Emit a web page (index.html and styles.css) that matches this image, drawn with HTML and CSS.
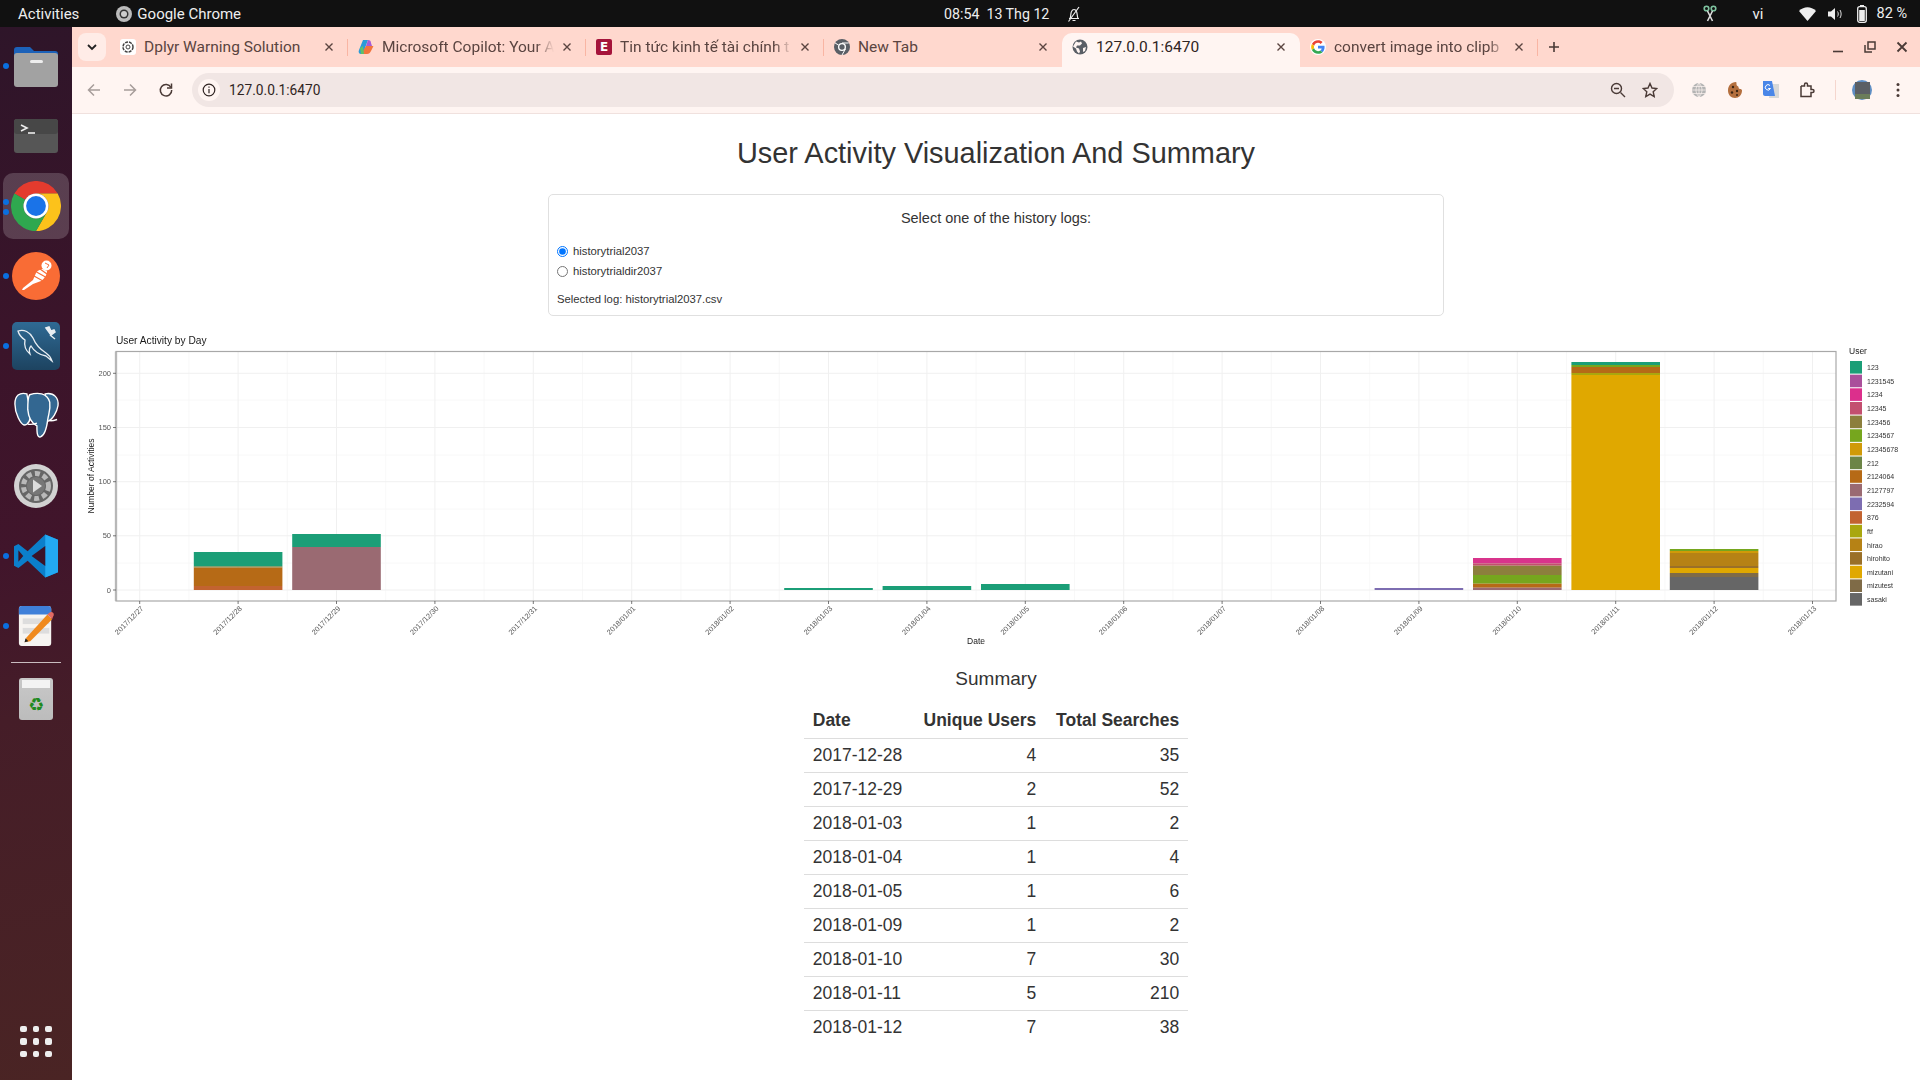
FILE: index.html
```html
<!DOCTYPE html>
<html lang="en">

<head>
    <meta charset="UTF-8">
    <title>User Activity Visualization And Summary</title>
    <link rel="stylesheet" href="styles.css">
</head>

<body>
    <header class="topbar">
        <span class="activities">Activities</span>
        <span class="app-name">
            <svg width="16" height="16" viewBox="0 0 16 16">
                <circle cx="8" cy="8" r="8" fill="#bbb" />
                <circle cx="8" cy="8" r="4.5" fill="#333" />
                <circle cx="8" cy="8" r="3" fill="#ccc" />
            </svg>
            Google Chrome
        </span>
        <span class="clock">08:54&nbsp; 13 Thg 12</span>
        <svg class="bell" width="16" height="18" viewBox="0 0 16 18" fill="none" stroke="#eee" stroke-width="1.2">
            <path d="M3 13.5h10M4 13.5c1-2 .5-5 1.5-7 .6-1.3 1.5-2 2.5-2s2 .7 2.5 2c1 2 .5 5 1.5 7M6.5 15.5h3M2.5 16.5L13 2" />
        </svg>
        <div class="tray">
            <svg width="14" height="18" viewBox="0 0 14 18" fill="none" stroke="#7fc4a0" stroke-width="1.6">
                <circle cx="3.5" cy="3.5" r="2.3" />
                <circle cx="10.5" cy="3.5" r="2.3" />
                <path d="M4.5 6l5 10M9.5 6l-5 10" stroke="#ddd" />
            </svg>
            <span class="tray-lang">vi</span>
            <svg class="tray-wifi" width="17" height="14" viewBox="0 0 17 14">
                <path d="M8.5 14L0 4c5-5 12-5 17 0z" fill="#eee" />
            </svg>
            <svg class="tray-sound" width="16" height="14" viewBox="0 0 16 14" fill="none" stroke="#ddd" stroke-width="1">
                <path d="M0 4.5h3L7 1v12L3 9.5H0z" fill="#eee" stroke="none" />
                <path d="M9.5 4.5c1 1.5 1 3.5 0 5M12 3c1.5 2.5 1.5 5.5 0 8" />
            </svg>
            <svg class="tray-battery" width="10" height="18" viewBox="0 0 10 18">
                <rect x=".7" y="1.7" width="8.6" height="15.6" rx="2" fill="none" stroke="#eee" stroke-width="1.3" />
                <rect x="3" y="0" width="4" height="2" fill="#eee" />
                <rect x="2.2" y="5" width="5.6" height="11" fill="#eee" />
            </svg>
            <span class="tray-percent">82 %</span>
        </div>
    </header>

    <div class="desktop">
        <nav class="dock">
            <div class="dock-item running">
                <svg width="46" height="44" viewBox="0 0 46 44">
                    <path d="M1 6c0-2 1-3 3-3h13l4 4h21c2 0 3 1 3 3v14H1z" fill="#1c62b9" />
                    <rect x="1" y="9" width="44" height="34" rx="3" fill="#a2a2a2" />
                    <rect x="17" y="16" width="13" height="3" rx="1.5" fill="#eee" />
                </svg>
            </div>
            <div class="dock-item">
                <svg width="44" height="34" viewBox="0 0 44 34">
                    <rect width="44" height="34" rx="3" fill="#565656" />
                    <rect width="44" height="15" rx="3" fill="#474747" />
                    <path d="M7 6l6 3-6 3" fill="none" stroke="#eee" stroke-width="1.6" />
                    <path d="M14 14h7" stroke="#eee" stroke-width="1.6" />
                </svg>
            </div>
            <div class="dock-item active running double">
                <svg width="50" height="50" viewBox="0 0 48 48">
                    <path d="M3.2 12A24 24 0 0 1 44.8 12H24A12 12 0 0 0 13.6 18z" fill="#e33b2e" />
                    <path d="M24 12H44.8A24 24 0 0 1 24 48L34.4 30A12 12 0 0 0 24 12z" fill="#fcc21b" />
                    <path d="M13.6 18L3.2 12A24 24 0 0 0 24 48L34.4 30A12 12 0 0 1 13.6 18z" fill="#2fa84f" />
                    <circle cx="24" cy="24" r="12" fill="#fff" />
                    <circle cx="24" cy="24" r="9.5" fill="#1a73e8" />
                </svg>
            </div>
            <div class="dock-item running">
                <svg width="48" height="48" viewBox="0 0 48 48">
                    <circle cx="24" cy="24" r="24" fill="#f96c35" />
                    <path d="M10 38l1-2 10-8 3-7c2-3 5-4 7-4l4 2c0 4-3 8-6 10l-8 3-9 6z" fill="#fff" />
                    <circle cx="34.5" cy="13.5" r="5" fill="#fff" />
                    <path d="M33 11l4 2-2 3" fill="none" stroke="#f96c35" />
                    <path d="M22 24l9 5M24.5 20l9 5M28 17l7 5" stroke="#f96c35" stroke-width="1.2" />
                </svg>
            </div>
            <div class="dock-item running">
                <svg width="48" height="48" viewBox="0 0 48 48">
                    <defs>
                        <linearGradient id="mysqlBg" x1="0" y1="0" x2="0" y2="1">
                            <stop offset="0%" stop-color="#2f6a94"></stop>
                            <stop offset="100%" stop-color="#1d4360"></stop>
                        </linearGradient>
                    </defs>
                    <rect width="48" height="48" rx="5" fill="url(#mysqlBg)" />
                    <path d="M6 9c6-2 12 1 15 7 2 5 5 10 13 15 3 2 5 5 6 8l-6-5c-6-1-12-5-15-10-2 2-2 5-1 8-5-4-6-9-5-14-3-2-6-5-7-9z" fill="none" stroke="#e8eef3" stroke-width="1.3" />
                    <path d="M34 6l5 7 4-3-1-2-3 1-2-4zM38 13l5 4" fill="#e8eef3" stroke="#e8eef3" stroke-width="1.5" />
                </svg>
            </div>
            <div class="dock-item">
                <svg class="pg-icon" width="72" height="70" viewBox="0 0 72 70" fill="#336791" stroke="#fff" stroke-width="1.5">
                    <path d="M26 13C18 11 13 15 13 24C13 34 19 46 23 47C27 47 30 44 30 34z" />
                    <path d="M46 13C56 11 61 18 60 26C59 32 54 42 48 43z" />
                    <path d="M29 14C38 11 48 12 51 22C52 30 50 34 49 40C48 48 46 58 41 60C37 61 37 54 37 48C33 46 28 42 27 30C27 22 27 17 29 14z" />
                    <path d="M27 46c4 1 7 0 10-1M50 42c3 1 6 0 9-1" fill="none" />
                </svg>
            </div>
            <div class="dock-item">
                <svg width="44" height="44" viewBox="0 0 44 44">
                    <circle cx="22" cy="22" r="22" fill="#d2d2d2" />
                    <circle cx="22" cy="22" r="17" fill="#666" />
                    <circle cx="22" cy="22" r="12.5" fill="none" stroke="#b9b9b9" stroke-width="5" stroke-dasharray="5 3.2" />
                    <circle cx="22" cy="22" r="9" fill="#777" />
                    <path d="M19 15.5l9 6.5-9 6.5z" fill="#ddd" />
                </svg>
            </div>
            <div class="dock-item running">
                <svg width="44" height="44" viewBox="0 0 100 100">
                    <path d="M71 99L31 61 10 77 0 72V28l10-5 21 16L71 1l29 12v74z" fill="#0b7fcb" />
                    <path d="M71 1l29 12v74L71 99z" fill="#23a9f2" />
                    <path d="M71 27L40 50l31 23z" fill="#3b1429" />
                    <path d="M10 37v26l11-13z" fill="#3b1429" />
                </svg>
            </div>
            <div class="dock-item running">
                <svg width="38" height="44" viewBox="0 0 40 44">
                    <rect x="2" y="1" width="34" height="42" rx="3" fill="#f6f4f1" />
                    <path d="M2 10V4c0-2 1-3 3-3h28c2 0 3 1 3 3v6z" fill="#3f80d9" />
                    <rect x="6" y="14" width="28" height="6" fill="#ddd" />
                    <rect x="6" y="24" width="28" height="6" fill="#ddd" />
                    <path d="M10 34l22-24 5 5-23 23-6 1z" fill="#f08a1d" />
                    <path d="M32 10l2-2c1-1 3-1 4 0s1 3 0 4l-1 3z" fill="#e26a63" />
                    <path d="M8 39l1-4 3 3z" fill="#222" />
                </svg>
            </div>
            <div class="dock-sep"></div>
            <div class="dock-item">
                <div class="trash"><span class="trash-lid"></span><span class="trash-mark">♻</span></div>
            </div>
            <div class="dock-grid">
                <i></i><i></i><i></i><i></i><i></i><i></i><i></i><i></i><i></i>
            </div>
        </nav>

        <div class="chrome">
            <div class="tabstrip">
                <div class="tab-search">
                    <svg width="10" height="7" viewBox="0 0 10 7" fill="none" stroke="#222" stroke-width="1.8">
                        <path d="M1 1l4 4 4-4" />
                    </svg>
                </div>

                <div class="tab">
                    <svg class="favicon" viewBox="0 0 16 16">
                        <rect width="16" height="16" rx="3" fill="#fff" />
                        <circle cx="8" cy="8" r="5" fill="none" stroke="#444" stroke-width="1.5" stroke-dasharray="3 1" />
                        <circle cx="8" cy="8" r="2" fill="none" stroke="#444" />
                    </svg>
                    <span class="tab-title">Dplyr Warning Solution</span>
                    <svg class="tab-close" viewBox="0 0 10 10"><path d="M1.5 1.5l7 7M8.5 1.5l-7 7" /></svg>
                </div>
                <div class="tab">
                    <svg class="favicon" viewBox="0 0 16 16">
                        <path d="M5 1h5l-3 8-1 6H3C1 15 0 13 1 11z" fill="#2a9bd8" />
                        <path d="M10 1c2 0 3 1 3 3l1 3H8z" fill="#a65bd6" />
                        <path d="M3 15h6c2 0 3-1 4-3l2-4c1-1 0-1-1-1l-6 0z" fill="#f2743d" />
                        <path d="M2 9l3-2 1 8H3z" fill="#5ec26a" />
                    </svg>
                    <span class="tab-title">Microsoft Copilot: Your A</span>
                    <svg class="tab-close" viewBox="0 0 10 10"><path d="M1.5 1.5l7 7M8.5 1.5l-7 7" /></svg>
                </div>
                <div class="tab">
                    <span class="favicon favicon-e">E</span>
                    <span class="tab-title">Tin tức kinh tế tài chính t</span>
                    <svg class="tab-close" viewBox="0 0 10 10"><path d="M1.5 1.5l7 7M8.5 1.5l-7 7" /></svg>
                </div>
                <div class="tab">
                    <svg class="favicon" viewBox="0 0 48 48">
                        <circle cx="24" cy="24" r="24" fill="#5a5f66" />
                        <circle cx="24" cy="24" r="12" fill="#fff" />
                        <circle cx="24" cy="24" r="8" fill="#5a5f66" />
                        <path d="M24 12H44M34.4 30L24 48M13.6 18L3.2 12" stroke="#fff" stroke-width="3" />
                    </svg>
                    <span class="tab-title">New Tab</span>
                    <svg class="tab-close" viewBox="0 0 10 10"><path d="M1.5 1.5l7 7M8.5 1.5l-7 7" /></svg>
                </div>
                <div class="tab tab-active">
                    <svg class="favicon" viewBox="0 0 16 16">
                        <circle cx="8" cy="8" r="7.5" fill="#5a5f66" />
                        <path d="M4 2.5l3 1 2-1 1 2-2 2-3 0-1 2 3 1 1 3-1 2-2-2-1-3-3-2zM11 9l3-1-1 4-2 1z" fill="#fff5f2" />
                    </svg>
                    <span class="tab-title">127.0.0.1:6470</span>
                    <svg class="tab-close" viewBox="0 0 10 10"><path d="M1.5 1.5l7 7M8.5 1.5l-7 7" /></svg>
                </div>
                <div class="tab">
                    <svg class="favicon" viewBox="-4 -4 56 56">
                        <circle cx="24" cy="24" r="28" fill="#fff" />
                        <path fill="#EA4335" d="M24 9.5c3.54 0 6.71 1.22 9.21 3.6l6.85-6.85C35.9 2.38 30.47 0 24 0 14.62 0 6.51 5.38 2.56 13.22l7.98 6.19C12.43 13.72 17.74 9.5 24 9.5z" />
                        <path fill="#4285F4" d="M46.98 24.55c0-1.57-.15-3.09-.38-4.55H24v9.02h12.94c-.58 2.96-2.26 5.48-4.78 7.18l7.73 6c4.51-4.18 7.09-10.36 7.09-17.65z" />
                        <path fill="#FBBC05" d="M10.53 28.59c-.48-1.45-.76-2.99-.76-4.59s.27-3.14.76-4.59l-7.98-6.19C.92 16.46 0 20.12 0 24c0 3.88.92 7.54 2.56 10.78l7.97-6.19z" />
                        <path fill="#34A853" d="M24 48c6.48 0 11.93-2.13 15.89-5.81l-7.73-6c-2.15 1.45-4.92 2.3-8.16 2.3-6.26 0-11.57-4.22-13.47-9.91l-7.98 6.19C6.51 42.62 14.62 48 24 48z" />
                    </svg>
                    <span class="tab-title">convert image into clipb</span>
                    <svg class="tab-close" viewBox="0 0 10 10"><path d="M1.5 1.5l7 7M8.5 1.5l-7 7" /></svg>
                </div>

                <div class="tab-new">
                    <svg width="12" height="12" viewBox="0 0 12 12" stroke="#4a3a36" stroke-width="1.6">
                        <path d="M6 1v10M1 6h10" />
                    </svg>
                </div>

                <div class="window-controls">
                    <svg width="12" height="12" viewBox="0 0 12 12" stroke="#4a3a36" stroke-width="1.6"><path d="M1 10.5h10" /></svg>
                    <svg width="12" height="12" viewBox="0 0 12 12" fill="none" stroke="#4a3a36" stroke-width="1.5">
                        <rect x="4" y="1" width="7" height="7" />
                        <path d="M1 4v7h7" />
                    </svg>
                    <svg width="12" height="12" viewBox="0 0 12 12" stroke="#4a3a36" stroke-width="1.8"><path d="M1.5 1.5l9 9M10.5 1.5l-9 9" /></svg>
                </div>
            </div>

            <div class="toolbar">
                <button class="tool-btn">
                    <svg width="16" height="16" viewBox="0 0 16 16" fill="none" stroke="#a79d9a" stroke-width="1.5"><path d="M14 8H2.5M8 2.5L2.5 8 8 13.5" /></svg>
                </button>
                <button class="tool-btn">
                    <svg width="16" height="16" viewBox="0 0 16 16" fill="none" stroke="#a79d9a" stroke-width="1.5"><path d="M2 8h11.5M8 2.5L13.5 8 8 13.5" /></svg>
                </button>
                <button class="tool-btn">
                    <svg width="16" height="16" viewBox="0 0 16 16" fill="none" stroke="#4a3a36" stroke-width="1.5">
                        <path d="M13 5.5A5.7 5.7 0 1 0 13.7 8" />
                        <path d="M13.5 1.5v4.5H9" />
                    </svg>
                </button>

                <div class="omnibox">
                    <span class="site-info">
                        <svg width="14" height="14" viewBox="0 0 14 14" fill="none" stroke="#2f2422" stroke-width="1.2">
                            <circle cx="7" cy="7" r="5.8" />
                            <path d="M7 6v4.2M7 3.5v1.3" />
                        </svg>
                    </span>
                    <span class="url">127.0.0.1:6470</span>
                    <svg class="omni-zoom" width="16" height="16" viewBox="0 0 16 16" fill="none" stroke="#4a3a36" stroke-width="1.4">
                        <circle cx="6.5" cy="6.5" r="5" />
                        <path d="M4 6.5h5M10.5 10.5L15 15" />
                    </svg>
                    <svg class="omni-star" width="16" height="16" viewBox="0 0 16 16" fill="none" stroke="#4a3a36" stroke-width="1.4">
                        <path d="M8 1.5l2 4.5 4.8.5-3.6 3.2 1 4.8L8 12.1 3.8 14.5l1-4.8L1.2 6.5 6 6z" />
                    </svg>
                </div>

                <div class="tool-ext">
                    <button class="tool-btn">
                        <svg width="16" height="16" viewBox="0 0 16 16" fill="none">
                            <circle cx="8" cy="8" r="7" fill="#b4b4b4" />
                            <path d="M1 8h14M8 1v14M2 4.5h12M2 11.5h12M8 1c-4 4-4 10 0 14M8 1c4 4 4 10 0 14" stroke="#fff5f2" stroke-width=".7" />
                        </svg>
                    </button>
                    <button class="tool-btn">
                        <svg width="16" height="18" viewBox="0 0 16 18">
                            <path d="M9 1C4 1 1 5 1 9.5S4 17 8 17s7-3 7-7.5c0-1-1-1.5-2-1.5s-1.5-1-1.5-2S9.5 5 9.5 3.5 9.5 1 9 1z" fill="#b46f3e" />
                            <circle cx="6" cy="6" r="1.2" fill="#3a2414" />
                            <circle cx="10" cy="10" r="1.2" fill="#3a2414" />
                            <circle cx="5" cy="11.5" r="1.2" fill="#3a2414" />
                            <circle cx="10" cy="14" r="1" fill="#3a2414" />
                        </svg>
                    </button>
                    <button class="tool-btn">
                        <svg width="16" height="18" viewBox="0 0 16 18">
                            <path d="M8 3h8v14H6z" fill="#d8d8d8" />
                            <path d="M0 0h9l3 15H2c-1 0-2-1-2-2z" fill="#4a86e8" />
                            <path d="M7 4.5a2.7 2.7 0 1 0 .5 3H5.2" fill="none" stroke="#fff" />
                        </svg>
                    </button>
                    <button class="tool-btn">
                        <svg width="16" height="16" viewBox="0 0 16 16" fill="none" stroke="#4a3a36" stroke-width="1.5">
                            <path d="M2 4h3.5V2.5a1.5 1.5 0 0 1 3 0V4H12v3.5h1.5a1.5 1.5 0 0 1 0 3H12V14.5H2V11" />
                            <path d="M2 4v7" />
                        </svg>
                    </button>
                    <span class="tool-sep"></span>
                    <button class="tool-btn">
                        <svg width="20" height="20" viewBox="0 0 20 20">
                            <circle cx="10" cy="10" r="10" fill="#5e8ec4" />
                            <rect x="3" y="2" width="15" height="12" fill="#5b5f65" />
                            <rect x="3" y="14" width="15" height="5" fill="#6b7d5a" />
                        </svg>
                    </button>
                    <button class="tool-btn">
                        <svg width="4" height="16" viewBox="0 0 4 16" fill="#4a3a36">
                            <circle cx="2" cy="2.5" r="1.5" />
                            <circle cx="2" cy="8" r="1.5" />
                            <circle cx="2" cy="13.5" r="1.5" />
                        </svg>
                    </button>
                </div>
            </div>

            <main class="page">
                <h1 class="page-title">User Activity Visualization And Summary</h1>

                <section class="well">
                    <h4 class="well-title">Select one of the history logs:</h4>
                    <label class="radio-row"><input type="radio" name="log" checked> historytrial2037</label>
                    <label class="radio-row"><input type="radio" name="log"> historytrialdir2037</label>
                    <p class="selected-log">Selected log: historytrial2037.csv</p>
                </section>

                <svg class="plot" width="1848" height="330" viewBox="72 330 1848 330">
                    <!-- grid -->
                    <path class="grid-minor" d="M116 400H1836M116 455H1836M116 509H1836M116 563H1836" />
                    <path class="grid-minor" d="M188.9 352V601m98.4-249V601m98.4-249V601m98.4-249V601m98.4-249V601m98.4-249V601m98.4-249V601m98.4-249V601m98.4-249V601m98.4-249V601m98.4-249V601m98.4-249V601m98.4-249V601m98.4-249V601m98.4-249V601m98.4-249V601m98.4-249V601" />
                    <path class="grid-major" d="M116 373.3H1836M116 427.5H1836M116 481.7H1836M116 535.8H1836M116 590H1836" />
                    <path class="grid-major" d="M139.7 352V601m98.4-249V601m98.4-249V601m98.4-249V601m98.4-249V601m98.4-249V601m98.4-249V601m98.4-249V601m98.4-249V601m98.4-249V601m98.4-249V601m98.4-249V601m98.4-249V601m98.4-249V601m98.4-249V601m98.4-249V601m98.4-249V601m98.4-249V601" />

                    <!-- bars -->
                    <g>
                        <rect x="193.8" y="552" width="88.6" height="14.3" fill="#1b9e77" />
                        <rect x="193.8" y="566.3" width="88.6" height="1.2" fill="#6c8547" />
                        <rect x="193.8" y="567.5" width="88.6" height="18.5" fill="#b66a16" />
                        <rect x="193.8" y="586" width="88.6" height="4" fill="#c26330" />

                        <rect x="292.2" y="534" width="88.6" height="13" fill="#1b9e77" />
                        <rect x="292.2" y="547" width="88.6" height="43" fill="#9a6a72" />

                        <rect x="784.2" y="588" width="88.6" height="2" fill="#1b9e77" />
                        <rect x="882.6" y="586" width="88.6" height="4" fill="#1b9e77" />
                        <rect x="981" y="584" width="88.6" height="6" fill="#1b9e77" />

                        <rect x="1374.6" y="588" width="88.6" height="2" fill="#7d6db1" />

                        <rect x="1473" y="558" width="88.6" height="5.3" fill="#d8348c" />
                        <rect x="1473" y="563.3" width="88.6" height="2.4" fill="#c34f6f" />
                        <rect x="1473" y="565.7" width="88.6" height="9.3" fill="#8c7f3d" />
                        <rect x="1473" y="575" width="88.6" height="8.7" fill="#76a61e" />
                        <rect x="1473" y="583.7" width="88.6" height="4" fill="#b66a16" />
                        <rect x="1473" y="587.7" width="88.6" height="2.3" fill="#9a6a72" />

                        <rect x="1571.4" y="362" width="88.6" height="3" fill="#1b9e77" />
                        <rect x="1571.4" y="365" width="88.6" height="2" fill="#76a61e" />
                        <rect x="1571.4" y="367" width="88.6" height="6" fill="#b66a16" />
                        <rect x="1571.4" y="373" width="88.6" height="2" fill="#a9a70e" />
                        <rect x="1571.4" y="375" width="88.6" height="215" fill="#e0a800" />

                        <rect x="1669.8" y="549" width="88.6" height="2" fill="#76a61e" />
                        <rect x="1669.8" y="551" width="88.6" height="2" fill="#d09a08" />
                        <rect x="1669.8" y="553" width="88.6" height="13" fill="#b68215" />
                        <rect x="1669.8" y="566" width="88.6" height="2" fill="#9a7028" />
                        <rect x="1669.8" y="568" width="88.6" height="5" fill="#e0a800" />
                        <rect x="1669.8" y="573" width="88.6" height="4" fill="#7f6b47" />
                        <rect x="1669.8" y="577" width="88.6" height="13" fill="#666666" />
                    </g>

                    <!-- panel border and ticks -->
                    <path class="axis-left" d="M116 351.5V601" />
                    <rect class="axis-box" x="116" y="351.5" width="1720" height="249.5" />
                    <path class="axis-tick" d="M113 373.3h3M113 427.5h3M113 481.7h3M113 535.8h3M113 590h3" />
                    <path class="axis-tick" d="M139.7 601v3m98.4-3v3m98.4-3v3m98.4-3v3m98.4-3v3m98.4-3v3m98.4-3v3m98.4-3v3m98.4-3v3m98.4-3v3m98.4-3v3m98.4-3v3m98.4-3v3m98.4-3v3m98.4-3v3m98.4-3v3m98.4-3v3m98.4-3v3" />

                    <!-- labels -->
                    <g class="plot-text">
                        <text class="plot-title" x="116" y="344">User Activity by Day</text>
                        <text class="axis-title" x="976" y="644" text-anchor="middle">Date</text>
                        <text class="axis-title" transform="rotate(-90 94 476)" x="94" y="476" text-anchor="middle">Number of Activities</text>

                        <g class="tick-label" text-anchor="end">
                            <text x="111" y="376">200</text>
                            <text x="111" y="430">150</text>
                            <text x="111" y="484">100</text>
                            <text x="111" y="538">50</text>
                            <text x="111" y="593">0</text>
                        </g>

                        <g class="tick-label tick-x" text-anchor="end">
                            <text transform="rotate(-45 144 609)" x="144" y="609">2017/12/27</text>
                            <text transform="rotate(-45 242.4 609)" x="242.4" y="609">2017/12/28</text>
                            <text transform="rotate(-45 340.8 609)" x="340.8" y="609">2017/12/29</text>
                            <text transform="rotate(-45 439.2 609)" x="439.2" y="609">2017/12/30</text>
                            <text transform="rotate(-45 537.6 609)" x="537.6" y="609">2017/12/31</text>
                            <text transform="rotate(-45 636 609)" x="636" y="609">2018/01/01</text>
                            <text transform="rotate(-45 734.4 609)" x="734.4" y="609">2018/01/02</text>
                            <text transform="rotate(-45 832.8 609)" x="832.8" y="609">2018/01/03</text>
                            <text transform="rotate(-45 931.2 609)" x="931.2" y="609">2018/01/04</text>
                            <text transform="rotate(-45 1029.6 609)" x="1029.6" y="609">2018/01/05</text>
                            <text transform="rotate(-45 1128 609)" x="1128" y="609">2018/01/06</text>
                            <text transform="rotate(-45 1226.4 609)" x="1226.4" y="609">2018/01/07</text>
                            <text transform="rotate(-45 1324.8 609)" x="1324.8" y="609">2018/01/08</text>
                            <text transform="rotate(-45 1423.2 609)" x="1423.2" y="609">2018/01/09</text>
                            <text transform="rotate(-45 1521.6 609)" x="1521.6" y="609">2018/01/10</text>
                            <text transform="rotate(-45 1620 609)" x="1620" y="609">2018/01/11</text>
                            <text transform="rotate(-45 1718.4 609)" x="1718.4" y="609">2018/01/12</text>
                            <text transform="rotate(-45 1816.8 609)" x="1816.8" y="609">2018/01/13</text>
                        </g>

                        <text class="axis-title" x="1849" y="354">User</text>
                        <g class="legend-label">
                            <text x="1867" y="370">123</text>
                            <text x="1867" y="383.7">1231545</text>
                            <text x="1867" y="397.3">1234</text>
                            <text x="1867" y="411">12345</text>
                            <text x="1867" y="424.6">123456</text>
                            <text x="1867" y="438.3">1234567</text>
                            <text x="1867" y="451.9">12345678</text>
                            <text x="1867" y="465.6">212</text>
                            <text x="1867" y="479.2">2124064</text>
                            <text x="1867" y="492.9">2127797</text>
                            <text x="1867" y="506.5">2232594</text>
                            <text x="1867" y="520.2">876</text>
                            <text x="1867" y="533.8">ftf</text>
                            <text x="1867" y="547.5">hirao</text>
                            <text x="1867" y="561.1">hirohito</text>
                            <text x="1867" y="574.8">mizutani</text>
                            <text x="1867" y="588.4">mizutest</text>
                            <text x="1867" y="602.1">sasaki</text>
                        </g>
                    </g>

                    <!-- legend keys -->
                    <g>
                        <rect x="1850" y="361" width="12" height="12.6" fill="#1b9e77" />
                        <rect x="1850" y="374.65" width="12" height="12.6" fill="#aa4f9b" />
                        <rect x="1850" y="388.3" width="12" height="12.6" fill="#dc2f8c" />
                        <rect x="1850" y="401.95" width="12" height="12.6" fill="#c34f6f" />
                        <rect x="1850" y="415.6" width="12" height="12.6" fill="#8c7f3d" />
                        <rect x="1850" y="429.25" width="12" height="12.6" fill="#76a61e" />
                        <rect x="1850" y="442.9" width="12" height="12.6" fill="#d09a08" />
                        <rect x="1850" y="456.55" width="12" height="12.6" fill="#6c8547" />
                        <rect x="1850" y="470.2" width="12" height="12.6" fill="#b66a16" />
                        <rect x="1850" y="483.85" width="12" height="12.6" fill="#9a6a72" />
                        <rect x="1850" y="497.5" width="12" height="12.6" fill="#7d6db1" />
                        <rect x="1850" y="511.15" width="12" height="12.6" fill="#c26330" />
                        <rect x="1850" y="524.8" width="12" height="12.6" fill="#a9a70e" />
                        <rect x="1850" y="538.45" width="12" height="12.6" fill="#b68215" />
                        <rect x="1850" y="552.1" width="12" height="12.6" fill="#9a7028" />
                        <rect x="1850" y="565.75" width="12" height="12.6" fill="#e0a800" />
                        <rect x="1850" y="579.4" width="12" height="12.6" fill="#7f6b47" />
                        <rect x="1850" y="593.05" width="12" height="12.6" fill="#666666" />
                    </g>
                </svg>

                <h3 class="summary-title">Summary</h3>
                <table class="summary">
                    <thead>
                        <tr><th>Date</th><th class="num">Unique Users</th><th class="num">Total Searches</th></tr>
                    </thead>
                    <tbody>
                        <tr><td>2017-12-28</td><td class="num">4</td><td class="num">35</td></tr>
                        <tr><td>2017-12-29</td><td class="num">2</td><td class="num">52</td></tr>
                        <tr><td>2018-01-03</td><td class="num">1</td><td class="num">2</td></tr>
                        <tr><td>2018-01-04</td><td class="num">1</td><td class="num">4</td></tr>
                        <tr><td>2018-01-05</td><td class="num">1</td><td class="num">6</td></tr>
                        <tr><td>2018-01-09</td><td class="num">1</td><td class="num">2</td></tr>
                        <tr><td>2018-01-10</td><td class="num">7</td><td class="num">30</td></tr>
                        <tr><td>2018-01-11</td><td class="num">5</td><td class="num">210</td></tr>
                        <tr><td>2018-01-12</td><td class="num">7</td><td class="num">38</td></tr>
                    </tbody>
                </table>
            </main>
        </div>
    </div>
</body>

</html>
```

FILE: styles.css
```css
* {
    box-sizing: border-box;
}

html,
body {
    margin: 0;
    height: 100%;
    overflow: hidden;
}

body {
    display: flex;
    flex-direction: column;
    font-family: "Liberation Sans", Arial, sans-serif;
    color: #333;
    background: #fff;
}

/* top bar */
.topbar {
    flex: none;
    display: flex;
    align-items: center;
    height: 27px;
    padding-left: 18px;
    background: #111;
    color: #eee;
    font-family: Roboto, sans-serif;
    font-size: 15px;
}

.app-name {
    display: flex;
    align-items: center;
    gap: 5px;
    margin-left: 37px;
}

.clock {
    margin-left: 703px;
    font-size: 14.2px;
}

.bell {
    margin-left: 17px;
}

.tray {
    display: flex;
    align-items: center;
    margin-left: auto;
    padding-right: 13px;
}

.tray-lang {
    margin-left: 36px;
}

.tray-wifi {
    margin-left: 36px;
}

.tray-sound {
    margin-left: 12px;
}

.tray-battery {
    margin-left: 13px;
}

.tray-percent {
    margin-left: 9px;
    font-size: 14.5px;
}

/* dock */
.desktop {
    flex: 1;
    display: flex;
    min-height: 0;
}

.dock {
    flex: none;
    display: flex;
    flex-direction: column;
    align-items: center;
    width: 72px;
    padding-top: 4px;
    background: linear-gradient(168deg, #2e1529 0%, #3b142a 30%, #41152b 50%, #451d28 65%, #4a2424 100%);
}

.dock-item {
    position: relative;
    flex: none;
    display: flex;
    align-items: center;
    justify-content: center;
    width: 66px;
    height: 70px;
}

.dock-item.active::before {
    content: "";
    position: absolute;
    inset: 2px 0;
    border-radius: 10px;
    background: rgba(255, 255, 255, .18);
}

.dock-item svg {
    position: relative;
}

.dock-item .pg-icon {
    top: -2px;
}

.dock-item.running::after {
    content: "";
    position: absolute;
    left: 0;
    top: 32px;
    width: 6px;
    height: 6px;
    border-radius: 50%;
    background: #0a6fe0;
}

.dock-item.double::after {
    top: 28px;
    box-shadow: 0 10px 0 #0a6fe0;
}

.dock-sep {
    flex: none;
    width: 50px;
    height: 1px;
    margin: 1px 0 1px;
    background: #c9bcc0;
}

.trash {
    display: flex;
    flex-direction: column;
    align-items: center;
    width: 34px;
    height: 42px;
    padding-top: 2px;
    border-radius: 3px;
    background: linear-gradient(#c8c8c8, #bcbcbc);
}

.trash-lid {
    width: 28px;
    height: 8px;
    background: #f3f3f3;
}

.trash-mark {
    margin-top: 8px;
    font-family: "DejaVu Sans", sans-serif;
    font-size: 18px;
    line-height: 18px;
    color: #1f8a1f;
}

.dock-grid {
    display: grid;
    grid-template-columns: repeat(3, 6.5px);
    gap: 6px;
    margin-top: auto;
    margin-bottom: 23px;
}

.dock-grid i {
    height: 6.5px;
    border-radius: 2px;
    background: #eee;
}

/* browser frame */
.chrome {
    flex: 1;
    display: flex;
    flex-direction: column;
    min-width: 0;
}

.tabstrip {
    flex: none;
    display: flex;
    align-items: flex-end;
    height: 40px;
    padding-left: 6px;
    background: #ffd8ce;
    font-family: Roboto, sans-serif;
    font-size: 15.5px;
    color: #5a4440;
}

.tab-search {
    display: flex;
    align-items: center;
    justify-content: center;
    align-self: flex-start;
    width: 28px;
    height: 28px;
    margin: 6px 4px 0 0;
    border-radius: 8px;
    background: #ffece7;
}

.tab {
    position: relative;
    display: flex;
    align-items: center;
    flex: none;
    width: 238px;
    height: 34px;
    padding: 0 14px 6px 10px;
    gap: 8px;
}

.tab::after {
    content: "";
    position: absolute;
    right: 0;
    top: 6px;
    width: 1.5px;
    height: 17px;
    background: #f9b5a3;
}

.tab:nth-child(5)::after,
.tab-active::after {
    display: none;
}

.tab-active {
    border-radius: 10px 10px 0 0;
    background: #fff5f2;
    color: #2f2422;
}

.favicon {
    flex: none;
    width: 16px;
    height: 16px;
}

.favicon-e {
    display: flex;
    align-items: center;
    justify-content: center;
    border-radius: 2px;
    background: #a5143b;
    color: #fff;
    font-family: "DejaVu Sans", sans-serif;
    font-size: 12px;
    font-weight: bold;
}

.tab-title {
    flex: 1;
    min-width: 0;
    overflow: hidden;
    white-space: nowrap;
}

.tab:nth-child(3) .tab-title,
.tab:nth-child(4) .tab-title,
.tab:nth-child(7) .tab-title {
    -webkit-mask-image: linear-gradient(to left, transparent 0, #000 18px);
    mask-image: linear-gradient(to left, transparent 0, #000 18px);
}

.tab-close {
    flex: none;
    width: 10px;
    height: 10px;
    fill: none;
    stroke: #5a4440;
    stroke-width: 1.4;
}

.tab-new {
    display: flex;
    align-items: center;
    justify-content: center;
    width: 32px;
    height: 34px;
    padding-bottom: 6px;
}

.window-controls {
    display: flex;
    align-items: center;
    gap: 20px;
    height: 34px;
    margin-left: auto;
    padding: 0 12px 6px 0;
}

.toolbar {
    flex: none;
    display: flex;
    align-items: center;
    height: 47px;
    padding: 0 4px 1px;
    background: #fff5f2;
    border-bottom: 1px solid #f0e1de;
}

.tool-btn {
    flex: none;
    display: flex;
    align-items: center;
    justify-content: center;
    width: 36px;
    height: 34px;
    padding: 0;
    border: 0;
    background: none;
}

.omnibox {
    flex: 1;
    display: flex;
    align-items: center;
    height: 34px;
    margin: 0 7px 0 8px;
    padding: 0 16px 0 6px;
    border-radius: 17px;
    background: #f1e6e4;
    font-family: Roboto, sans-serif;
    font-size: 13.75px;
    color: #2f2422;
}

.site-info {
    display: flex;
    align-items: center;
    justify-content: center;
    width: 22px;
    height: 22px;
    border-radius: 50%;
    background: #fff5f2;
}

.url {
    margin-left: 9px;
}

.omni-zoom {
    margin-left: auto;
}

.omni-star {
    margin-left: 16px;
}

.tool-ext {
    display: flex;
    align-items: center;
}

.tool-sep {
    width: 1px;
    height: 20px;
    margin: 0 8px 0 10px;
    background: #f5d6ce;
}

/* page */
.page {
    flex: 1;
    min-height: 0;
    overflow: hidden;
    background: #fff;
}

.page-title {
    height: 34px;
    margin: 22px 0 24px;
    font-size: 28.9px;
    font-weight: 400;
    line-height: 34px;
    text-align: center;
    color: #333;
}

.well {
    width: 896px;
    height: 122px;
    margin: 0 auto 14px;
    padding: 14px 8px 0;
    border: 1px solid #e0e0e0;
    border-radius: 5px;
    font-size: 11.3px;
}

.well-title {
    height: 18px;
    margin: 0 0 14px;
    font-size: 14.5px;
    font-weight: 400;
    line-height: 18px;
    text-align: center;
}

.radio-row {
    display: flex;
    align-items: center;
    height: 20px;
}

.radio-row input {
    width: 11px;
    height: 11px;
    margin: 0 5px 0 0;
}

.selected-log {
    margin: 11px 0 0;
    line-height: 14px;
}

.plot {
    display: block;
    font-family: "Liberation Sans", Arial, sans-serif;
}

.grid-major {
    fill: none;
    stroke: #f0f0f0;
    stroke-width: 1;
}

.grid-minor {
    fill: none;
    stroke: #f6f6f6;
    stroke-width: .8;
}

.axis-box {
    fill: none;
    stroke: #a8a8a8;
    stroke-width: 1.2;
}

.axis-left {
    fill: none;
    stroke: #cfcfcf;
    stroke-width: 2.5;
}

.axis-tick {
    fill: none;
    stroke: #555;
    stroke-width: .8;
}

.plot-text {
    filter: blur(.25px);
}

.plot-title {
    font-size: 10.2px;
    fill: #1a1a1a;
}

.axis-title {
    font-size: 8.5px;
    fill: #1a1a1a;
}

.tick-label {
    font-size: 7.5px;
    fill: #555;
}

.tick-x {
    font-size: 7.4px;
}

.legend-label {
    font-size: 7px;
    fill: #333;
}

.summary-title {
    height: 22px;
    margin: 8px 0 14px;
    font-size: 19px;
    font-weight: 400;
    line-height: 22px;
    text-align: center;
}

.summary {
    width: 384px;
    margin: 0 auto;
    border-collapse: collapse;
    font-size: 17.5px;
}

.summary th,
.summary td {
    height: 34px;
    padding: 0 8.75px;
    text-align: left;
    white-space: nowrap;
}

.summary td {
    border-top: 1px solid #ddd;
}

.summary th {
    font-weight: 700;
}

.summary .num {
    text-align: right;
}
```
